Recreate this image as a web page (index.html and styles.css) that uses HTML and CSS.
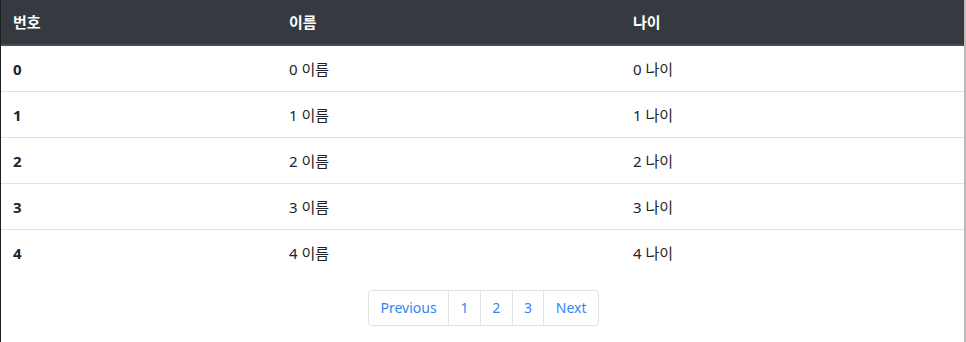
FILE: index.html
```html
<!DOCTYPE html>
<html>
<head>
  <meta charset="utf-8">
  <title>목록</title>
  <link rel="stylesheet" href="styles.css">
</head>
<body>
  <div class="page">
    <table class="list-table">
      <colgroup>
        <col class="col-no">
        <col class="col-name">
        <col class="col-age">
      </colgroup>
      <thead>
        <tr>
          <th>번호</th>
          <th>이름</th>
          <th>나이</th>
        </tr>
      </thead>
      <tbody>
        <tr><th>0</th><td>0 이름</td><td>0 나이</td></tr>
        <tr><th>1</th><td>1 이름</td><td>1 나이</td></tr>
        <tr><th>2</th><td>2 이름</td><td>2 나이</td></tr>
        <tr><th>3</th><td>3 이름</td><td>3 나이</td></tr>
        <tr><th>4</th><td>4 이름</td><td>4 나이</td></tr>
      </tbody>
    </table>

    <ul class="pagination">
      <li><a href="#">Previous</a></li>
      <li><a href="#">1</a></li>
      <li><a href="#">2</a></li>
      <li><a href="#">3</a></li>
      <li><a href="#">Next</a></li>
    </ul>
  </div>
</body>
</html>
```

FILE: styles.css
```css
html, body {
  margin: 0;
  height: 100%;
}

body {
  font-family: "Noto Sans", "Noto Sans CJK KR", sans-serif;
  font-size: 15px;
  color: #212529;
  background-color: #fff;
}

.page {
  box-sizing: border-box;
  height: 100%;
  border-left: 1px solid #1e1e1e;
  border-right: 2px solid #b9b9b9;
  display: flex;
  flex-direction: column;
  align-items: center;
}

.list-table {
  width: 100%;
  border-collapse: collapse;
  table-layout: fixed;
}

.col-no { width: 276px; }
.col-name { width: 344px; }

.list-table th,
.list-table td {
  text-align: left;
  padding: 11px 12px 10px;
  line-height: 24px;
  border-top: 1px solid #dee2e6;
}

.list-table thead th {
  background-color: #343a40;
  color: #fff;
  font-weight: bold;
  border-top: none;
  border-bottom: 2px solid #454d55;
  padding: 10px 12px;
}

.list-table tbody th {
  font-weight: bold;
}

.list-table tbody tr:first-child th,
.list-table tbody tr:first-child td {
  border-top: none;
}

.pagination {
  display: flex;
  list-style: none;
  margin: 15px 0 0 2px;
  padding: 0;
  font-size: 14px;
}

.pagination a {
  display: block;
  padding: 7px 11.4px;
  line-height: 20px;
  color: #2f86fb;
  text-decoration: none;
  border: 1px solid #dee2e6;
  margin-left: -1px;
}

.pagination li:first-child a {
  margin-left: 0;
  border-radius: 4px 0 0 4px;
}

.pagination li:last-child a {
  border-radius: 0 4px 4px 0;
}
```
